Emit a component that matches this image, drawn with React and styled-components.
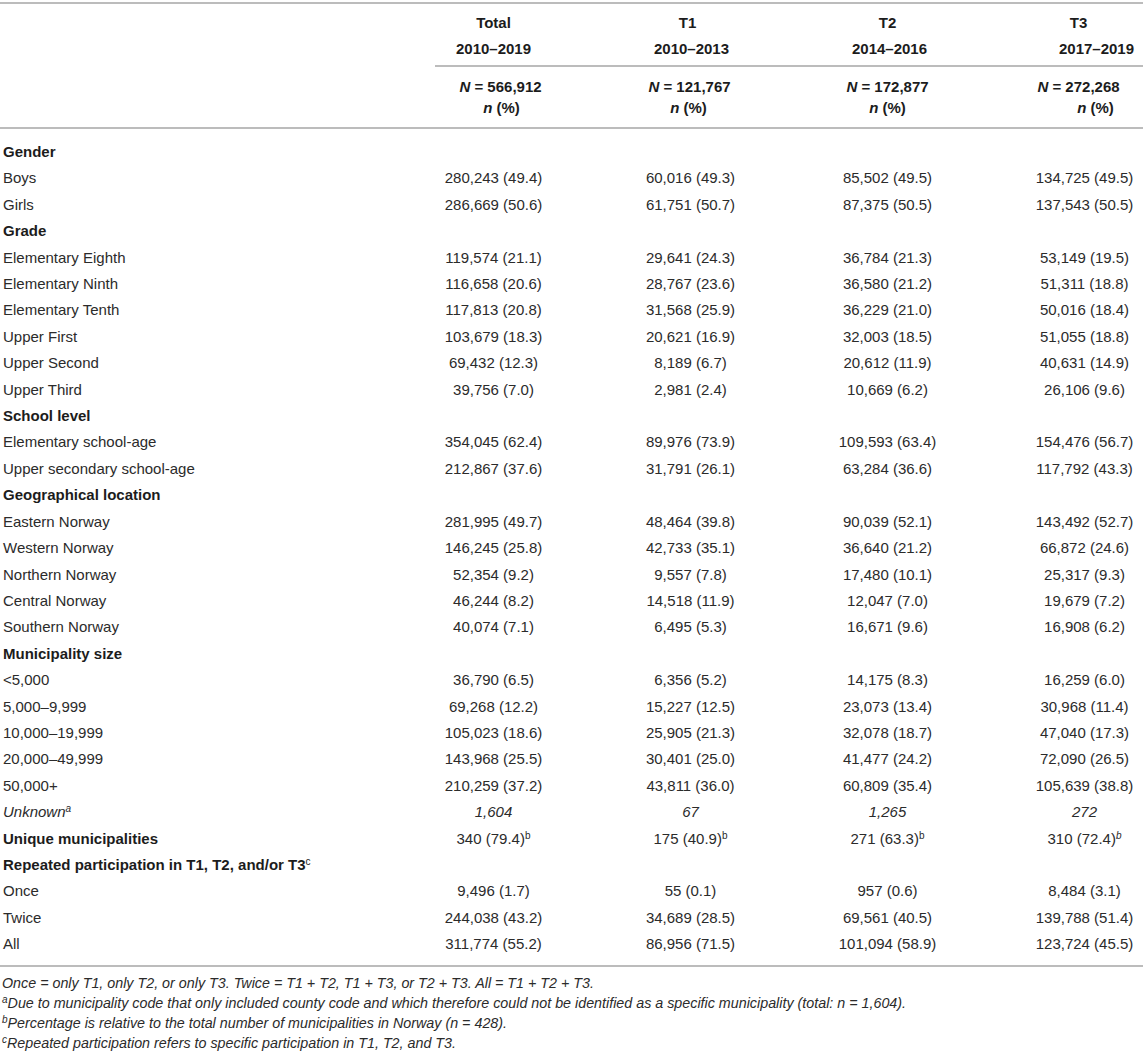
import React from "react";
import styled, { createGlobalStyle } from "styled-components";

const GlobalStyle = createGlobalStyle`
  body {
    margin: 0;
    background: #fff;
    font-family: "Liberation Sans", Arial, sans-serif;
    color: #2b2b2b;
  }
`;

const Wrap = styled.div`
  width: 1143px;
  padding-top: 2px;
`;

const Rule = styled.div`
  border-top: 2px solid #bcbcbc;
  grid-column: ${({ $from }) => ($from ? `${$from} / -1` : "auto")};
  margin-left: ${({ $inset }) => $inset || 0}px;
`;

const Row = styled.div`
  display: grid;
  grid-template-columns: 395px 197px 197px 197px 1fr;
  line-height: ${({ $lh }) => $lh || 26.4}px;
  font-size: 15px;
`;

const HeadCell = styled.div`
  font-weight: 700;
  color: #1c1c1c;
  text-align: center;
  padding: ${({ $pad }) => $pad};
  padding-left: ${({ $last }) => ($last ? 40 : 0)}px;
  display: flex;
  flex-direction: column;
`;

const HeadLine = styled.span`
  padding-left: ${({ $shift = 0 }) => Math.max(0, $shift * 2)}px;
  padding-right: ${({ $shift = 0 }) => Math.max(0, -$shift * 2)}px;
`;

const Label = styled.div`
  padding-left: 3px;
  font-weight: ${({ $bold }) => ($bold ? 700 : 400)};
  font-style: ${({ $italic }) => ($italic ? "italic" : "normal")};
  color: ${({ $bold }) => ($bold ? "#1c1c1c" : "#2b2b2b")};
  white-space: nowrap;
`;

const Value = styled.div`
  text-align: center;
  padding-left: ${({ $last }) => ($last ? 40 : 0)}px;
  font-style: ${({ $italic }) => ($italic ? "italic" : "normal")};
  white-space: nowrap;
`;

const Body = styled.div`
  padding: 10px 0 7px;
`;

const Sup = styled.sup`
  font-size: 10px;
  line-height: 0;
  vertical-align: 5px;
  font-style: ${({ $italic }) => ($italic ? "italic" : "inherit")};
  font-weight: 400;
`;

const Notes = styled.div`
  padding: 6px 0 0 2px;
  font-size: 14.3px;
  line-height: 20px;
  font-style: italic;
  color: #2b2b2b;
`;

const Note = styled.div`
  white-space: nowrap;
`;

// shifts: [name, years, N line, n line] offsets of the centre, in px
const columns = [
  { name: "Total", years: "2010–2019", n: "566,912", shifts: [0, 0, 7, 8] },
  { name: "T1", years: "2010–2013", n: "121,767", shifts: [-3, 1, -1, -2] },
  { name: "T2", years: "2014–2016", n: "172,877", shifts: [0, 2, 0, 0] },
  { name: "T3", years: "2017–2019", n: "272,268", shifts: [-6, 12, -6, 11] },
];

const rows = [
  { label: "Gender", head: true },
  { label: "Boys", v: ["280,243 (49.4)", "60,016 (49.3)", "85,502 (49.5)", "134,725 (49.5)"] },
  { label: "Girls", v: ["286,669 (50.6)", "61,751 (50.7)", "87,375 (50.5)", "137,543 (50.5)"] },
  { label: "Grade", head: true },
  { label: "Elementary Eighth", v: ["119,574 (21.1)", "29,641 (24.3)", "36,784 (21.3)", "53,149 (19.5)"] },
  { label: "Elementary Ninth", v: ["116,658 (20.6)", "28,767 (23.6)", "36,580 (21.2)", "51,311 (18.8)"] },
  { label: "Elementary Tenth", v: ["117,813 (20.8)", "31,568 (25.9)", "36,229 (21.0)", "50,016 (18.4)"] },
  { label: "Upper First", v: ["103,679 (18.3)", "20,621 (16.9)", "32,003 (18.5)", "51,055 (18.8)"] },
  { label: "Upper Second", v: ["69,432 (12.3)", "8,189 (6.7)", "20,612 (11.9)", "40,631 (14.9)"] },
  { label: "Upper Third", v: ["39,756 (7.0)", "2,981 (2.4)", "10,669 (6.2)", "26,106 (9.6)"] },
  { label: "School level", head: true },
  { label: "Elementary school-age", v: ["354,045 (62.4)", "89,976 (73.9)", "109,593 (63.4)", "154,476 (56.7)"] },
  { label: "Upper secondary school-age", v: ["212,867 (37.6)", "31,791 (26.1)", "63,284 (36.6)", "117,792 (43.3)"] },
  { label: "Geographical location", head: true },
  { label: "Eastern Norway", v: ["281,995 (49.7)", "48,464 (39.8)", "90,039 (52.1)", "143,492 (52.7)"] },
  { label: "Western Norway", v: ["146,245 (25.8)", "42,733 (35.1)", "36,640 (21.2)", "66,872 (24.6)"] },
  { label: "Northern Norway", v: ["52,354 (9.2)", "9,557 (7.8)", "17,480 (10.1)", "25,317 (9.3)"] },
  { label: "Central Norway", v: ["46,244 (8.2)", "14,518 (11.9)", "12,047 (7.0)", "19,679 (7.2)"] },
  { label: "Southern Norway", v: ["40,074 (7.1)", "6,495 (5.3)", "16,671 (9.6)", "16,908 (6.2)"] },
  { label: "Municipality size", head: true },
  { label: "<5,000", v: ["36,790 (6.5)", "6,356 (5.2)", "14,175 (8.3)", "16,259 (6.0)"] },
  { label: "5,000–9,999", v: ["69,268 (12.2)", "15,227 (12.5)", "23,073 (13.4)", "30,968 (11.4)"] },
  { label: "10,000–19,999", v: ["105,023 (18.6)", "25,905 (21.3)", "32,078 (18.7)", "47,040 (17.3)"] },
  { label: "20,000–49,999", v: ["143,968 (25.5)", "30,401 (25.0)", "41,477 (24.2)", "72,090 (26.5)"] },
  { label: "50,000+", v: ["210,259 (37.2)", "43,811 (36.0)", "60,809 (35.4)", "105,639 (38.8)"] },
  { label: "Unknown", sup: "a", italic: true, v: ["1,604", "67", "1,265", "272"] },
  { label: "Unique municipalities", head: true, vsup: "b", v: ["340 (79.4)", "175 (40.9)", "271 (63.3)", "310 (72.4)"] },
  { label: "Repeated participation in T1, T2, and/or T3", sup: "c", head: true },
  { label: "Once", v: ["9,496 (1.7)", "55 (0.1)", "957 (0.6)", "8,484 (3.1)"] },
  { label: "Twice", v: ["244,038 (43.2)", "34,689 (28.5)", "69,561 (40.5)", "139,788 (51.4)"] },
  { label: "All", v: ["311,774 (55.2)", "86,956 (71.5)", "101,094 (58.9)", "123,724 (45.5)"] },
];

const App = () => {
  return (
    <>
      <GlobalStyle />
      <Wrap>
        <Rule />
        <Row $lh={26}>
          <div />
          {columns.map((c, i) => (
            <HeadCell key={c.name} $pad="6px 0 3px" $last={i === 3}>
              <HeadLine $shift={c.shifts[0]}>{c.name}</HeadLine>
              <HeadLine $shift={c.shifts[1]}>{c.years}</HeadLine>
            </HeadCell>
          ))}
        </Row>
        <Row>
          <Rule $from={2} $inset={40} />
        </Row>
        <Row $lh={21}>
          <div />
          {columns.map((c, i) => (
            <HeadCell key={c.name} $pad="9px 0 9px" $last={i === 3}>
              <HeadLine $shift={c.shifts[2]}>
                <i>N</i> = {c.n}
              </HeadLine>
              <HeadLine $shift={c.shifts[3]}>
                <i>n</i> (%)
              </HeadLine>
            </HeadCell>
          ))}
        </Row>
        <Rule />
        <Body>
          {rows.map((r) => (
            <Row key={r.label}>
              <Label $bold={r.head} $italic={r.italic}>
                {r.label}
                {r.sup && <Sup>{r.sup}</Sup>}
              </Label>
              {(r.v || ["", "", "", ""]).map((val, i) => (
                <Value key={i} $last={i === 3} $italic={r.italic}>
                  {val}
                  {r.vsup && val && <Sup $italic={i === 3}>{r.vsup}</Sup>}
                </Value>
              ))}
            </Row>
          ))}
        </Body>
        <Rule />
        <Notes>
          <Note>
            Once = only T1, only T2, or only T3. Twice = T1 + T2, T1 + T3, or T2 + T3. All = T1 + T2 + T3.
          </Note>
          <Note>
            <Sup>a</Sup>Due to municipality code that only included county code and which therefore could not be
            identified as a specific municipality (total: n = 1,604).
          </Note>
          <Note>
            <Sup>b</Sup>Percentage is relative to the total number of municipalities in Norway (n = 428).
          </Note>
          <Note>
            <Sup>c</Sup>Repeated participation refers to specific participation in T1, T2, and T3.
          </Note>
        </Notes>
      </Wrap>
    </>
  );
};

export default App;
